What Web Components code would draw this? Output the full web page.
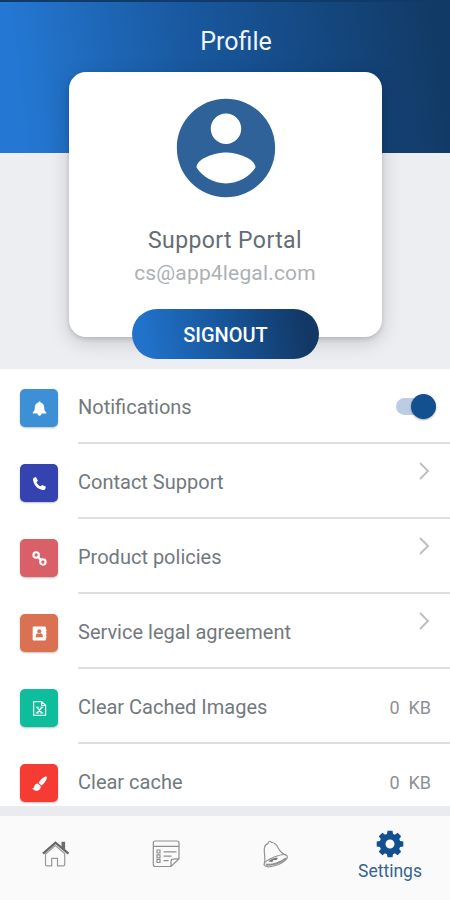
<!DOCTYPE html>
<html lang="en">
<head>
<meta charset="UTF-8">
<meta name="viewport" content="width=device-width, initial-scale=1">
<title>Profile</title>
<style>
  body {
    margin: 0;
    font-family: Roboto, "Liberation Sans", sans-serif;
    background: #fff;
  }
</style>
</head>
<body>
<profile-screen>
  <profile-header slot="header">
    Profile
    <profile-card slot="card">
      <span slot="name">Support Portal</span>
      <span slot="email">cs@app4legal.com</span>
    </profile-card>
    <pill-button slot="action">SIGNOUT</pill-button>
  </profile-header>

  <setting-row icon="bell" style="--tile: #3d8fd6">Notifications<toggle-switch slot="end"></toggle-switch></setting-row>
  <setting-row icon="phone" style="--tile: #3443b0">Contact Support<chevron-icon slot="end"></chevron-icon></setting-row>
  <setting-row icon="link" style="--tile: #d95f68">Product policies<chevron-icon slot="end"></chevron-icon></setting-row>
  <setting-row icon="contact" style="--tile: #d97152">Service legal agreement<chevron-icon slot="end"></chevron-icon></setting-row>
  <setting-row icon="file" style="--tile: #0dbd9c">Clear Cached Images<size-label slot="end">0 KB</size-label></setting-row>
  <setting-row icon="brush" style="--tile: #f53b32">Clear cache<size-label slot="end">0 KB</size-label></setting-row>

  <tab-bar slot="footer">
    <tab-item icon="home"></tab-item>
    <tab-item icon="notes"></tab-item>
    <tab-item icon="alarm"></tab-item>
    <tab-item icon="gear" active>Settings</tab-item>
  </tab-bar>
</profile-screen>

<script>
const tileIcons = {
  bell: '<path fill="#fff" d="M8 .5c.8 0 1.200.5 1.200 1.200C11.700 2.300 13 4.300 13 7c0 3 .7 4 2.200 5.100V13.300H.8v-1.200C2.300 11 3 10 3 7c0-2.700 1.300-4.700 3.800-5.300C6.800 1 7.200.5 8 .5zM5.800 13.300h4.400c0 1.500-.9 2.300-2.200 2.300s-2.200-.8-2.200-2.300z"/>',
  phone: '<path fill="#fff" d="M2 1.800 4.200 1l2.100 4-1.500 1.600c.9 2 2.400 3.500 4.500 4.400l1.600-1.500 4 2-.8 2.400c-.4 1-1.600 1.200-2.600 1C6 13.900 2.200 10.100 1.200 4.500c-.2-1 0-2.300.8-2.700z"/>',
  link: '<g fill="none" stroke="#fff" stroke-width="2.200"><circle cx="4.400" cy="4.300" r="2.900"/><circle cx="11.600" cy="11.700" r="2.900"/><path d="m5.600 5.600 4.800 4.800" stroke-width="2.600"/></g>',
  contact: '<path fill="#fff" d="M2 .5h11.500c.8 0 1.300.5 1.300 1.300v1.700h.7v2h-.7v1.500h.7v2h-.7v1.500h.7v2h-.7v1.700c0 .8-.5 1.300-1.300 1.300H2C1.200 15.500.7 15 .7 14.200V1.800C.7 1 1.200.5 2 .5z"/><g fill="var(--tile)"><circle cx="7.800" cy="5.500" r="2.100"/><path d="M3.900 12.100c0-3 1.200-4.400 2.300-4.400.9.7 2.300.7 3.200 0 1.100 0 2.300 1.400 2.300 4.400z"/></g>',
  file: '<g fill="none" stroke="#fff" stroke-width="1.300"><path d="M1.700.8h8.800l4 3.800v10.600H1.700zM10.300.8v4h4.200"/><path d="m5.200 6.800 5.500 6M10.700 6.800l-5.500 6M4.200 6.800h3M9 6.800h3M4.200 12.800h3M9 12.800h3"/></g>',
  brush: '<path fill="#fff" d="M14 .6c1.300-.6 2.300.4 1.900 1.700-1 3-3.200 6-5.900 7.900L7 7.300C8.800 4.400 11.100 2 14 .6zM6.300 8l3 3c.2 2.800-1.500 4.600-4.300 4.600-2.200 0-3.900-.9-5-2.800 1 .5 1.700.2 2.200-1.200C2.900 9.200 4.200 8 6.300 8z"/>'
};

const tabIcons = {
  home: '<path d="M3.500 14v10.400c0 1 .4 1.400 1.200 1.400h5v-7.500h5.800v7.500h6c.8 0 1.200-.4 1.200-1.400V13.500L13.300 5.500z" fill="none" stroke="#9a9a9a" stroke-width="1.200"/><path d="m1 13.700 12.500-11 13 11" fill="none" stroke="#666" stroke-width="2.300"/><path d="M19.500 1.800h3.600v9l-3.600-3z" fill="#6c6c6c"/>',
  notes: '<g fill="none" stroke="#8f8f8f" stroke-width="1.200"><path d="M3.300 1h21.700c1.300 0 2 .7 2 2v15.700l-8 7.800H3.300c-1.300 0-2-.7-2-2V3c0-1.300.7-2 2-2zM1.300 6.300H27M19 26.500v-4.900c0-1.700.6-2.400 2.300-2.400l5.700-.5"/><path d="M11.500 11.800h13M11.500 16.200h8M11.500 20.700h5"/><path d="M5 10h3v3H5zM5 14.800h3v3H5zM5 19.500h3v3H5z"/></g>',
  alarm: '<g fill="none" stroke="#939393" stroke-width="1.200"><path d="M3.300 23.200C5 19 2.500 11.500 3.500 7.500 4 5.200 5.500 4 7 3.600 7 1.200 9.300.8 10.500 2.500c3.400-.2 5.400 2.600 7 6 1.700 3.300 4 5.300 7.500 6.600"/><path d="M25.500 15.100c3 2.800-2.400 7-8 9.400-6.500 2.600-12.800 3.200-14.200.8-1.400-2.900 4.400-6.100 10-8.300 5-2 9.800-3.300 12.200-1.900z"/><path d="M25 18.300c-4.400 4.300-14.400 7.500-20.300 6.200" stroke-width="1.900"/></g><path d="M7.200 21.500c2-2 4.800-3.300 8.400-4.100l1.300 1.300-1.600 1.400-3.300.2-.6 1.700z" fill="#777"/>',
  gear: '<g fill="#12508f"><path d="M11.500.7h5l.8 5h-6.600zM11.500 27.300h5l.8-5h-6.600zM.7 11.500v5l5 .8v-6.600zM27.300 11.500v5l-5 .8v-6.600z"/><path transform="rotate(45 14 14)" d="M11.500.7h5l.8 5h-6.600zM11.500 27.300h5l.8-5h-6.600zM.7 11.500v5l5 .8v-6.600zM27.300 11.500v5l-5 .8v-6.600z"/></g><circle cx="14" cy="14" r="7.500" fill="none" stroke="#12508f" stroke-width="6"/>'
};

// Attaches an open shadow root with the given markup
class BaseElement extends HTMLElement {
  constructor() {
    super();
    this.attachShadow({ mode: 'open' });
  }

  connectedCallback() {
    this.shadowRoot.innerHTML = this.render();
  }
}

class ProfileScreen extends BaseElement {
  render() {
    return `
      <style>
        :host {
          display: flex;
          flex-direction: column;
          height: 900px;
          width: 450px;
          overflow: hidden;
        }
        main { flex: 1; min-height: 0; overflow: hidden; background: #fff; }
      </style>
      <slot name="header"></slot>
      <main><slot></slot></main>
      <slot name="footer"></slot>`;
  }
}

class ProfileHeader extends BaseElement {
  render() {
    return `
      <style>
        :host {
          display: flex;
          flex-direction: column;
          align-items: center;
          height: 369px;
          flex: none;
          overflow: hidden;
          background:
            linear-gradient(#0f3a69, #0f3a69) 0 0 / 100% 2px no-repeat,
            linear-gradient(83deg, #2478d3 5%, #1959a0 42%, #154b86 66%, #123a66 96%) 0 0 / 100% 153px no-repeat,
            #edeef2;
        }
        h1 {
          margin: 0;
          padding: 27px 0 15px 22px;
          font-size: 25px;
          line-height: 30px;
          font-weight: 400;
          color: #f1f5ff;
        }
      </style>
      <h1><slot></slot></h1>
      <slot name="card"></slot>
      <slot name="action"></slot>`;
  }
}

class ProfileCard extends BaseElement {
  render() {
    return `
      <style>
        :host {
          display: flex;
          flex-direction: column;
          align-items: center;
          box-sizing: border-box;
          width: 313px;
          height: 265px;
          flex: none;
          padding-top: 17px;
          border-radius: 17px;
          background: #fff;
          box-shadow: 0 5px 20px rgba(0, 0, 0, .17), 0 2px 5px rgba(0, 0, 0, .14);
        }
        svg { width: 118px; height: 118px; padding-left: 1px; }
        .name {
          margin-top: 20px;
          font-size: 23px;
          line-height: 28px;
          letter-spacing: .4px;
          color: #646c74;
        }
        .email {
          margin-top: 5px;
          font-size: 21px;
          line-height: 26px;
          letter-spacing: .17px;
          color: #acb0b4;
        }
      </style>
      <svg viewBox="0 0 24 24" fill="#2e6298">
        <path d="M12 2C6.480 2 2 6.480 2 12s4.480 10 10 10 10-4.480 10-10S17.520 2 12 2zm0 3c1.740 0 3.100 1.400 3.100 3.100s-1.400 3.100-3.100 3.100-3.100-1.400-3.100-3.100S10.300 5 12 5zm0 14.200c-2.500 0-4.710-1.280-6-3.220.03-1.990 4-3.080 6-3.080 1.990 0 5.970 1.090 6 3.080-1.290 1.940-3.500 3.220-6 3.220z"/>
      </svg>
      <div class="name"><slot name="name"></slot></div>
      <div class="email"><slot name="email"></slot></div>`;
  }
}

class PillButton extends BaseElement {
  render() {
    return `
      <style>
        :host { display: block; margin-top: -28px; }
        button {
          display: block;
          width: 187px;
          height: 50px;
          padding: 2px 0 0 1px;
          border: 0;
          border-radius: 25px;
          background: linear-gradient(80deg, #2072ca 8%, #17559a 50%, #123865 92%);
          color: #fff;
          font: 500 20px/48px Roboto, sans-serif;
          text-align: center;
        }
      </style>
      <button type="button"><slot></slot></button>`;
  }
}

class SettingRow extends BaseElement {
  render() {
    return `
      <style>
        :host {
          display: flex;
          height: 75px;
          padding-left: 20px;
        }
        .tile {
          display: flex;
          align-items: center;
          justify-content: center;
          width: 38px;
          height: 38px;
          margin: 20px 20px 0 0;
          border-radius: 5px;
          background: var(--tile);
          box-shadow: 0 1px 2px rgba(0, 0, 0, .25);
        }
        svg { width: 15px; height: 15px; }
        .body {
          display: flex;
          flex: 1;
          justify-content: space-between;
          box-sizing: border-box;
          border-bottom: 2px solid #dcdfe1;
        }
        .label {
          font-size: 20px;
          line-height: 77px;
          height: 73px;
          color: #72797e;
          white-space: nowrap;
        }
      </style>
      <div class="tile"><svg viewBox="0 0 16 16">${tileIcons[this.getAttribute('icon')]}</svg></div>
      <div class="body">
        <div class="label"><slot></slot></div>
        <slot name="end"></slot>
      </div>`;
  }
}

class ToggleSwitch extends BaseElement {
  render() {
    return `
      <style>
        :host {
          display: flex;
          align-items: center;
          justify-content: flex-end;
          width: 40px;
          height: 17px;
          margin: 29px 14px 0 0;
          border-radius: 9px;
          background: #bccce3;
        }
        i {
          width: 25px;
          height: 25px;
          border-radius: 50%;
          background: #12508f;
          box-shadow: 0 1px 2px rgba(0, 0, 0, .35);
        }
      </style>
      <i></i>`;
  }
}

class ChevronIcon extends BaseElement {
  render() {
    return `
      <style>
        :host { display: block; margin: 17px 20px 0 0; }
        svg { display: block; width: 12px; height: 20px; }
      </style>
      <svg viewBox="0 0 12 20" fill="none" stroke="#bcbec0" stroke-width="1.900">
        <path d="m2 2 8 8-8 8"/>
      </svg>`;
  }
}

class SizeLabel extends BaseElement {
  render() {
    return `
      <style>
        :host {
          display: block;
          height: 73px;
          margin-right: 19px;
          font-size: 18px;
          line-height: 77px;
          word-spacing: 4.5px;
          color: #8c9194;
        }
      </style>
      <slot></slot>`;
  }
}

class TabBar extends BaseElement {
  render() {
    return `
      <style>
        :host {
          display: grid;
          grid-template-columns: 111px 109px 109px 121px;
          flex: none;
          height: 84px;
          border-top: 10px solid #e9ebee;
          background: #fafafa;
        }
      </style>
      <slot></slot>`;
  }
}

class TabItem extends BaseElement {
  render() {
    const active = this.hasAttribute('active');
    return `
      <style>
        :host {
          display: flex;
          flex-direction: column;
          align-items: center;
          padding-top: ${active ? 14 : 24}px;
          ${active ? 'padding-left: 1px;' : ''}
        }
        svg { width: 28px; height: 28px; flex: none; }
        span {
          margin-top: 1px;
          font-size: 17.5px;
          line-height: 24px;
          color: #33658f;
        }
      </style>
      <svg viewBox="0 0 28 28">${tabIcons[this.getAttribute('icon')]}</svg>
      <span><slot></slot></span>`;
  }
}

customElements.define('profile-screen', ProfileScreen);
customElements.define('profile-header', ProfileHeader);
customElements.define('profile-card', ProfileCard);
customElements.define('pill-button', PillButton);
customElements.define('setting-row', SettingRow);
customElements.define('toggle-switch', ToggleSwitch);
customElements.define('chevron-icon', ChevronIcon);
customElements.define('size-label', SizeLabel);
customElements.define('tab-bar', TabBar);
customElements.define('tab-item', TabItem);
</script>
</body>
</html>
